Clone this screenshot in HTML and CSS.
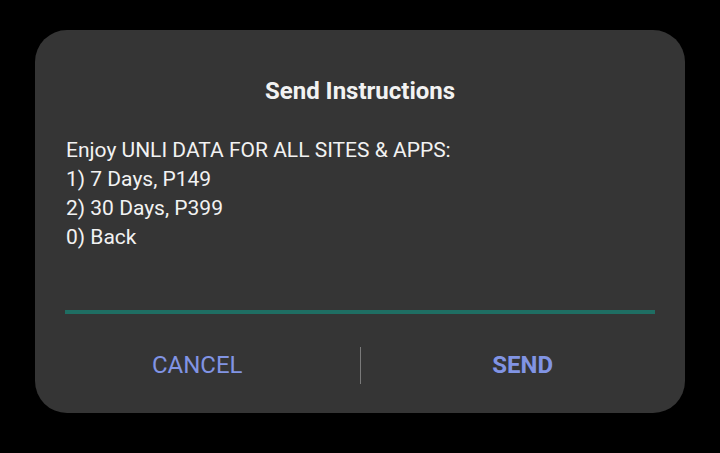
FILE: index.html
```html
<!DOCTYPE html>
<html>
<head>
<meta charset="utf-8">
<link rel="stylesheet" href="styles.css">
</head>
<body>
<div class="dialog">
  <div class="title">Send Instructions</div>
  <div class="message">
    <div>Enjoy UNLI DATA FOR ALL SITES &amp; APPS:</div>
    <div>1) 7 Days, P149</div>
    <div>2) 30 Days, P399</div>
    <div>0) Back</div>
  </div>
  <div class="input"></div>
  <div class="actions">
    <div class="btn">CANCEL</div>
    <div class="divider"></div>
    <div class="btn send">SEND</div>
  </div>
</div>
</body>
</html>
```
FILE: styles.css
```css
html, body {
  margin: 0;
  padding: 0;
  background: #000;
  width: 720px;
  height: 453px;
  overflow: hidden;
  font-family: Roboto, "Noto Sans", sans-serif;
}
body {
  padding-top: 30px;
  box-sizing: border-box;
}
.dialog {
  margin-left: 35px;
  width: 650px;
  height: 383px;
  box-sizing: border-box;
  background: #353535;
  border-radius: 32px;
  padding: 46px 30px 0 30px;
  display: flex;
  flex-direction: column;
  color: #f2f2f2;
}
.title {
  text-align: center;
  font-weight: 700;
  font-size: 24px;
  line-height: 30px;
}
.message {
  margin-top: 30px;
  padding-left: 1px;
  font-size: 21px;
  line-height: 29px;
}
.input {
  margin-top: 58px;
  height: 4px;
  background: #1f6e63;
}
.actions {
  margin: 23px -30px 0 -30px;
  height: 56px;
  display: flex;
  align-items: center;
}
.btn {
  flex: 1;
  text-align: center;
  font-size: 24px;
  color: #8194e4;
}
.send {
  font-weight: 700;
}
.divider {
  width: 1px;
  height: 37px;
  background: #7a7a7a;
}
```
